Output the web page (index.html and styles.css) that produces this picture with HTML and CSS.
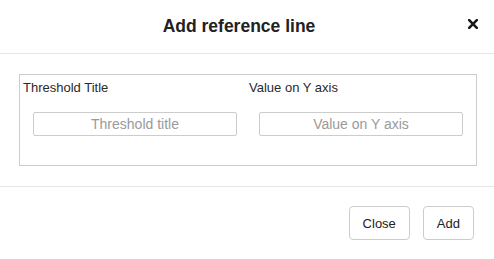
FILE: index.html
```html
<!DOCTYPE html>
<html>
<head>
<meta charset="utf-8">
<link rel="stylesheet" href="styles.css">
</head>
<body>
<div class="modal">
  <div class="modal-header">
    <h4 class="modal-title">Add reference line</h4>
    <button class="close" aria-label="Close">
      <svg width="10" height="10" viewBox="0 0 10 10"><path d="M1.2 1.2 L8.8 8.8 M8.8 1.2 L1.2 8.8" stroke="#1a1a1a" stroke-width="2.6" stroke-linecap="square"/></svg>
    </button>
  </div>
  <div class="modal-body">
    <div class="fields">
      <div class="field">
        <label class="field-label">Threshold Title</label>
        <input class="field-input" type="text" placeholder="Threshold title">
      </div>
      <div class="field">
        <label class="field-label">Value on Y axis</label>
        <input class="field-input" type="text" placeholder="Value on Y axis">
      </div>
    </div>
  </div>
  <div class="modal-footer">
    <button class="btn">Close</button>
    <button class="btn">Add</button>
  </div>
</div>
</body>
</html>
```
FILE: styles.css
```css
html, body {
  margin: 0;
  padding: 0;
  background: #fff;
}
body {
  font-family: "Liberation Sans", Arial, sans-serif;
  color: #333;
  width: 494px;
  height: 259px;
  overflow: hidden;
}
.modal {
  display: flex;
  flex-direction: column;
}
.modal-header {
  height: 54px;
  box-sizing: border-box;
  display: flex;
  align-items: flex-start;
  padding: 0 16px 0 10px;
  border-bottom: 1px solid #e5e5e5;
}
.modal-title {
  flex: 1;
  margin: 0;
  padding-top: 16px;
  text-align: center;
  font-size: 17.5px;
  font-weight: bold;
  line-height: 20px;
  color: #222;
}
.close {
  margin: 19px 0 0 0;
  padding: 0;
  border: 0;
  background: none;
  width: 10px;
  height: 10px;
  display: flex;
}
.modal-body {
  padding: 20px 17px 20px 19px;
  border-bottom: 1px solid #e5e5e5;
}
.fields {
  border: 1px solid #cdcdcd;
  height: 92px;
  box-sizing: border-box;
  display: grid;
  grid-template-columns: 226px 1fr;
  padding: 4px 0 0 3px;
}
.field {
  display: flex;
  flex-direction: column;
  align-items: flex-start;
}
.field-label {
  font-size: 13px;
  line-height: 18px;
  color: #2a2a2a;
}
.field-input {
  margin: 15px 0 0 10px;
  width: 204px;
  height: 24px;
  box-sizing: border-box;
  border: 1px solid #ccc;
  border-radius: 2px;
  padding: 0 6px;
  font-family: "Liberation Sans", Arial, sans-serif;
  font-size: 14px;
  text-align: center;
  outline: none;
}
.field-input::placeholder {
  color: #9a9a9a;
}
.modal-footer {
  display: flex;
  justify-content: flex-end;
  gap: 13px;
  padding: 19px 20px 0 0;
}
.btn {
  height: 34px;
  padding: 0 13px;
  background: #fff;
  border: 1px solid #ccc;
  border-radius: 4px;
  font-family: "Liberation Sans", Arial, sans-serif;
  font-size: 13px;
  color: #222;
}
```
